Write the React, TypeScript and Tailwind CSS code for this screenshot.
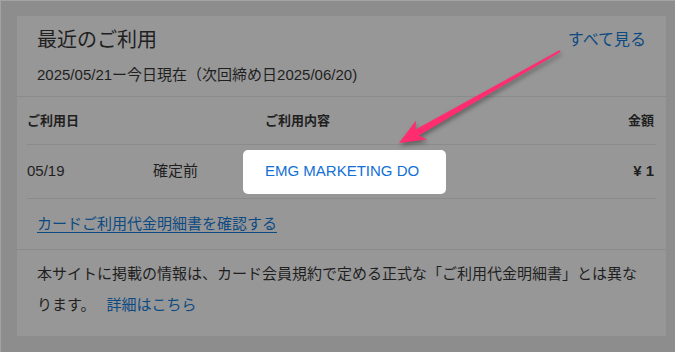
export default function App() {
  return (
    <div className="relative w-[675px] h-[352px] overflow-hidden bg-[#8d8d8d] border-t border-l border-[#a3a3a3] pl-[16px] pt-[15px] font-['Liberation_Sans','Noto_Sans_CJK_JP',sans-serif] text-[#1f1f1f]">
      <div className="w-[649px] h-[320px] bg-[#979797] flex flex-col">
        {/* heading */}
        <div className="px-[20px] pt-[10px] pb-[10px] border-b border-[#8b8b8b]">
          <div className="flex items-center justify-between h-[28px]">
            <h2 className="text-[20px] leading-[28px] font-normal">最近のご利用</h2>
            <a className="text-[16px] leading-[28px] text-[#0e4a82]">すべて見る</a>
          </div>
          <p className="mt-[10px] text-[15px] leading-[22px]">2025/05/21ー今日現在（次回締め日2025/06/20)</p>
        </div>

        {/* table */}
        <div className="px-[10px]">
          <div className="grid grid-cols-[126px_90px_203px_1fr] items-center h-[48px] border-b border-[#8b8b8b] text-[13px] font-bold">
            <div>ご利用日</div>
            <div />
            <div className="pl-[22px]">ご利用内容</div>
            <div className="text-right pr-[2px]">金額</div>
          </div>
          <div className="grid grid-cols-[126px_90px_203px_1fr] items-center h-[54px] border-b border-[#8b8b8b] text-[15px]">
            <div>05/19</div>
            <div>確定前</div>
            <div className="h-[44px] bg-white rounded-[5px] flex items-center pl-[22px] text-[#1170d6]">EMG MARKETING DO</div>
            <div className="text-right font-bold pr-[2px]">¥ 1</div>
          </div>
        </div>

        <div className="px-[20px] h-[51px] flex items-center border-b border-[#8b8b8b]">
          <a className="text-[15px] leading-[22px] text-[#0e4a82] underline underline-offset-[3px]">カードご利用代金明細書を確認する</a>
        </div>

        <div className="px-[20px] pt-[8px] text-[15px] leading-[31px]">
          <p>本サイトに掲載の情報は、カード会員規約で定める正式な「ご利用代金明細書」とは異な</p>
          <p className="flex">
            <span>ります。</span>
            <a className="ml-[11px] text-[#0e4a82]">詳細はこちら</a>
          </p>
        </div>
      </div>

      <svg className="absolute left-0 top-0 drop-shadow-[1px_3px_2px_rgba(0,0,0,0.35)]" width="675" height="352" viewBox="0 0 675 352">
        <polygon
          points="398,142 415,119.6 414.5,128.5 558.3,49.3 559.7,50.7 417.9,134.5 426,138.6"
          fill="#ff2d6f"
          strokeLinejoin="round"
        />
      </svg>
    </div>
  );
}
